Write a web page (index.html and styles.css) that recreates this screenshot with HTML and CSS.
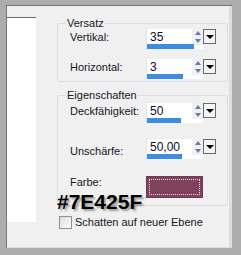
FILE: index.html
```html
<!DOCTYPE html>
<html lang="de">
<head>
    <meta charset="UTF-8">
    <title>Schatten</title>
    <link rel="stylesheet" href="styles.css">
</head>
<body>

    <div class="frame">
        <div class="sidebar"></div>

        <div class="main">
            <!-- Versatz -->
            <fieldset class="group group-offset">
                <legend>Versatz</legend>
                <div class="row">
                    <span class="label">Vertikal:</span>
                    <div class="spin">
                        <div class="spin-box">
                            <span class="spin-value">35</span>
                            <span class="spin-arrows"><i class="up"></i><i class="down"></i></span>
                            <span class="spin-bar" style="width:47px"></span>
                        </div>
                        <span class="spin-drop"><i></i></span>
                    </div>
                </div>
                <div class="row">
                    <span class="label">Horizontal:</span>
                    <div class="spin">
                        <div class="spin-box">
                            <span class="spin-value">3</span>
                            <span class="spin-arrows"><i class="up"></i><i class="down"></i></span>
                            <span class="spin-bar" style="width:36px"></span>
                        </div>
                        <span class="spin-drop"><i></i></span>
                    </div>
                </div>
            </fieldset>

            <!-- Eigenschaften -->
            <fieldset class="group group-props">
                <legend>Eigenschaften</legend>
                <div class="row">
                    <span class="label">Deckfähigkeit:</span>
                    <div class="spin">
                        <div class="spin-box">
                            <span class="spin-value">50</span>
                            <span class="spin-arrows"><i class="up"></i><i class="down"></i></span>
                            <span class="spin-bar" style="width:34px"></span>
                        </div>
                        <span class="spin-drop"><i></i></span>
                    </div>
                </div>
                <div class="row row-wide">
                    <span class="label label-low">Unschärfe:</span>
                    <div class="spin">
                        <div class="spin-box">
                            <span class="spin-value">50,00</span>
                            <span class="spin-arrows"><i class="up"></i><i class="down"></i></span>
                            <span class="spin-bar" style="width:35px"></span>
                        </div>
                        <span class="spin-drop"><i></i></span>
                    </div>
                </div>
                <div class="row row-color">
                    <span class="label label-top">Farbe:</span>
                    <div class="swatch" style="background-color:#7E425F"></div>
                    <div class="hex">#7E425F</div>
                </div>
            </fieldset>

            <label class="check">
                <span class="check-box"></span>
                Schatten auf neuer Ebene
            </label>
        </div>
    </div>

</body>
</html>
```

FILE: styles.css
```css
body {
    margin: 0;
    font-family: "Liberation Sans", Arial, sans-serif;
    font-size: 11px;
    color: #161626;
    background-color: #a9a9a9;
}

.frame {
    display: flex;
    box-sizing: border-box;
    width: 241px;
    height: 255px;
    background-color: #f0f0f0;
    border-style: solid;
    border-color: #adadad;
    border-width: 5px 9px 7px 6px;
    box-shadow: inset 1px 1px 0 #767676, inset -3px -1px 0 #dedede;
}

.sidebar {
    width: 29px;
    height: 205px;
    margin: 12px 0 0 1px;
    background-color: #fff;
    border-top: 1px solid #6c6c6c;
    box-sizing: border-box;
}

.main {
    display: flex;
    flex-direction: column;
    margin-left: 21px;
    padding-top: 13px;
    width: 171px;
}

.group {
    margin: 0;
    padding: 0 11px 2px 12px;
    border: 1px solid #d8dfe4;
    border-radius: 3px;
}

.group legend {
    padding: 0 1px;
    margin-left: -4px;
    line-height: 11px;
}

.group-props {
    margin-top: 8px;
    padding-bottom: 7px;
}

.row {
    display: flex;
    align-items: flex-start;
    margin-top: 9px;
}

.group .row:first-of-type {
    margin-top: -1px;
}

.group-props .row:first-of-type {
    margin-top: 1px;
}

.row-wide {
    margin-top: 15px;
}

.row-color {
    position: relative;
    margin-top: 17px;
}

.label {
    width: 76px;
    padding-top: 3px;
    line-height: 13px;
}

.label-low {
    padding-top: 7px;
}

.label-top {
    padding-top: 0;
}

.spin {
    display: flex;
    align-items: flex-start;
}

.spin-box {
    position: relative;
    box-sizing: border-box;
    width: 57px;
    height: 21px;
    background-color: #fff;
    border-left: 1px solid #e2e3ea;
    border-top: 1px solid #eeeeee;
}

.spin-value {
    display: block;
    padding: 2px 0 0 3px;
    font-size: 12px;
    line-height: 13px;
    color: #0c0c30;
}

.spin-arrows {
    position: absolute;
    top: 0;
    right: 0;
    width: 11px;
    height: 16px;
    background-color: #eef0f4;
    display: flex;
    flex-direction: column;
    justify-content: space-around;
    align-items: center;
}

.spin-arrows i {
    width: 0;
    height: 0;
    border-left: 3px solid transparent;
    border-right: 3px solid transparent;
}

.spin-arrows .up {
    border-bottom: 4px solid #6a7a9e;
}

.spin-arrows .down {
    border-top: 4px solid #6a7a9e;
}

.spin-bar {
    position: absolute;
    left: 0;
    bottom: 0;
    height: 5px;
    background-color: #3c8de0;
}

.spin-drop {
    box-sizing: border-box;
    width: 13px;
    height: 15px;
    margin-top: 1px;
    border: 1px solid #6b6b6b;
    background-color: #f4f4f4;
    display: flex;
    align-items: center;
    justify-content: center;
}

.spin-drop i {
    width: 0;
    height: 0;
    border-left: 4px solid transparent;
    border-right: 4px solid transparent;
    border-top: 4px solid #000;
}

.swatch {
    box-sizing: border-box;
    width: 57px;
    height: 22px;
    border: 1px solid #6e3a53;
    outline: 1px dotted #e8dce2;
    outline-offset: -4px;
}

.hex {
    position: absolute;
    left: -13px;
    top: 18px;
    font-size: 21px;
    line-height: 16px;
    font-weight: bold;
    color: #000;
    text-shadow: 2px 2px 2px rgba(0, 0, 0, 0.35);
}

.check {
    display: flex;
    align-items: center;
    gap: 3px;
    margin-top: 10px;
    padding-left: 2px;
    line-height: 13px;
}

.check-box {
    box-sizing: border-box;
    width: 13px;
    height: 13px;
    border: 1px solid #8e8f8f;
    background: linear-gradient(135deg, #dcdcdc, #fdfdfd);
}
```
